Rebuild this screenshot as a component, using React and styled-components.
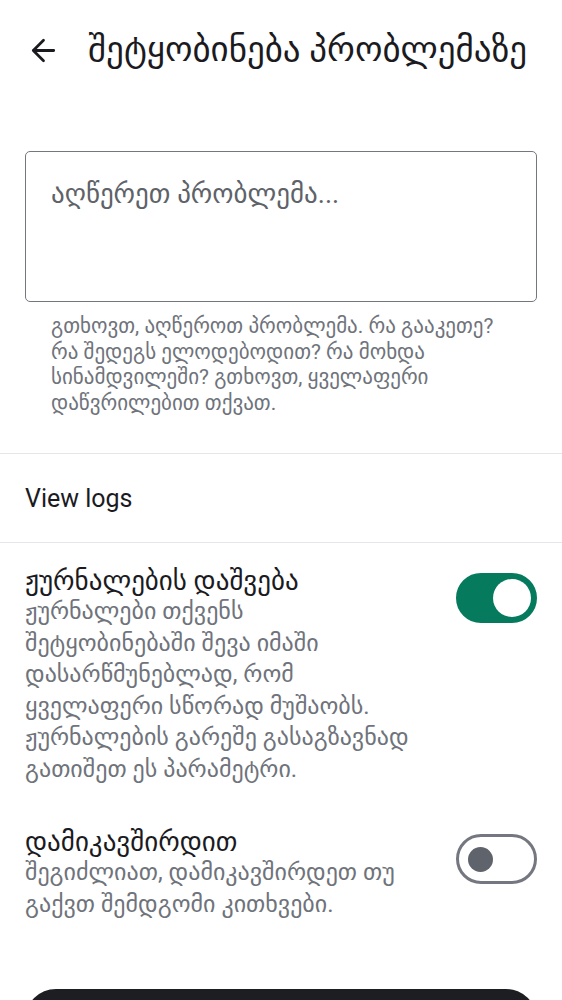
import React, { useState } from "react";
import styled, { createGlobalStyle } from "styled-components";

const GlobalStyle = createGlobalStyle`
  html, body {
    margin: 0;
    padding: 0;
    background: #ffffff;
  }
  body {
    font-family: Roboto, "DejaVu Sans", sans-serif;
    color: #1b1b1f;
    overflow: hidden;
  }
`;

const helperLines = [
  "გთხოვთ, აღწეროთ პრობლემა. რა გააკეთე?",
  "რა შედეგს ელოდებოდით? რა მოხდა",
  "სინამდვილეში? გთხოვთ, ყველაფერი",
  "დაწვრილებით თქვათ.",
];

const settings = [
  {
    key: "logs",
    title: "ჟურნალების დაშვება",
    lines: [
      "ჟურნალები თქვენს",
      "შეტყობინებაში შევა იმაში",
      "დასარწმუნებლად, რომ",
      "ყველაფერი სწორად მუშაობს.",
      "ჟურნალების გარეშე გასაგზავნად",
      "გათიშეთ ეს პარამეტრი.",
    ],
    on: true,
  },
  {
    key: "contact",
    title: "დამიკავშირდით",
    lines: ["შეგიძლიათ, დამიკავშირდეთ თუ", "გაქვთ შემდგომი კითხვები."],
    on: false,
  },
];

export default function App() {
  const [state, setState] = useState(
    Object.fromEntries(settings.map((s) => [s.key, s.on]))
  );

  return (
    <Screen>
      <GlobalStyle />
      <TopBar>
        <BackButton aria-label="back">
          <svg width="35" height="35" viewBox="0 0 24 24">
            <path
              d="M19 12H5M12 5l-7 7 7 7"
              fill="none"
              stroke="#1b1b1f"
              strokeWidth="1.9"
              strokeLinecap="round"
              strokeLinejoin="round"
            />
          </svg>
        </BackButton>
        <Title>შეტყობინება პრობლემაზე</Title>
      </TopBar>

      <FieldWrap>
        <TextArea placeholder="აღწერეთ პრობლემა..." />
        <Helper>
          {helperLines.map((l) => (
            <Line key={l}>{l}</Line>
          ))}
        </Helper>
      </FieldWrap>

      <Divider $top={37} />
      <LinkRow>View logs</LinkRow>
      <Divider />

      {settings.map((s) => (
        <SwitchRow key={s.key}>
          <RowText>
            <RowTitle>{s.title}</RowTitle>
            <RowDesc>
              {s.lines.map((l) => (
                <Line key={l}>{l}</Line>
              ))}
            </RowDesc>
          </RowText>
          <Switch
            $on={state[s.key]}
            onClick={() => setState({ ...state, [s.key]: !state[s.key] })}
          >
            <Thumb $on={state[s.key]} />
          </Switch>
        </SwitchRow>
      ))}

      {/* send button, scrolled mostly below the fold */}
      <SendButton aria-label="გაგზავნა" />
    </Screen>
  );
}

const Screen = styled.div`
  width: 562px;
  height: 1000px;
  overflow: hidden;
  display: flex;
  flex-direction: column;
`;

const TopBar = styled.div`
  height: 100px;
  flex: none;
  display: flex;
  align-items: center;
  padding-left: 26px;
  gap: 27px;
`;

const BackButton = styled.button`
  width: 35px;
  height: 35px;
  border: none;
  background: none;
  padding: 0;
  display: flex;
  align-items: center;
  justify-content: center;
`;

const Title = styled.h1`
  margin: 0;
  font-size: 35px;
  line-height: 44px;
  font-weight: 400;
  color: #1b1b1f;
  white-space: nowrap;
`;

const FieldWrap = styled.div`
  padding: 51px 25px 0;
  display: flex;
  flex-direction: column;
`;

const TextArea = styled.textarea`
  height: 151px;
  box-sizing: border-box;
  border: 1.5px solid #74777f;
  border-radius: 5px;
  padding: 24px 25px;
  font-family: Roboto, "DejaVu Sans", sans-serif;
  font-size: 27px;
  line-height: 36px;
  resize: none;
  outline: none;
  &::placeholder {
    color: #5e6269;
  }
`;

const Helper = styled.div`
  margin-top: 12px;
  padding: 0 16px 0 26px;
  font-size: 21px;
  line-height: 25.5px;
  color: #6f737b;
`;

const Line = styled.span`
  display: block;
  white-space: nowrap;
`;

const Divider = styled.hr`
  flex: none;
  margin: ${(p) => p.$top || 0}px 0 0;
  border: none;
  border-top: 1px solid #e6e6ea;
`;

const LinkRow = styled.div`
  height: 88px;
  flex: none;
  display: flex;
  align-items: center;
  padding: 0 25px;
  font-size: 25px;
  color: #1b1b1f;
`;

const SwitchRow = styled.div`
  flex: none;
  display: flex;
  align-items: flex-start;
  gap: 20px;
  padding: 23px 25px 19px;
`;

const RowText = styled.div`
  flex: 1;
  min-width: 0;
  display: flex;
  flex-direction: column;
`;

const RowTitle = styled.div`
  font-size: 27px;
  line-height: 30px;
  color: #1b1b1f;
`;

const RowDesc = styled.div`
  font-size: 24px;
  line-height: 31.5px;
  color: #6f737b;
`;

const Switch = styled.button`
  flex: none;
  margin-top: 7px;
  width: 81px;
  height: 50px;
  box-sizing: border-box;
  border-radius: 25px;
  border: 3px solid ${(p) => (p.$on ? "#067a5d" : "#74777f")};
  background: ${(p) => (p.$on ? "#067a5d" : "#ffffff")};
  display: flex;
  align-items: center;
  justify-content: ${(p) => (p.$on ? "flex-end" : "flex-start")};
  padding: 0 ${(p) => (p.$on ? "3px" : "9px")};
`;

const Thumb = styled.span`
  display: block;
  width: ${(p) => (p.$on ? "38px" : "25px")};
  height: ${(p) => (p.$on ? "38px" : "25px")};
  border-radius: 50%;
  background: ${(p) => (p.$on ? "#ffffff" : "#5f636b")};
`;

const SendButton = styled.button`
  flex: none;
  margin: 50px 25px 0;
  height: 62px;
  border: none;
  border-radius: 31px;
  background: #1d1e22;
`;
